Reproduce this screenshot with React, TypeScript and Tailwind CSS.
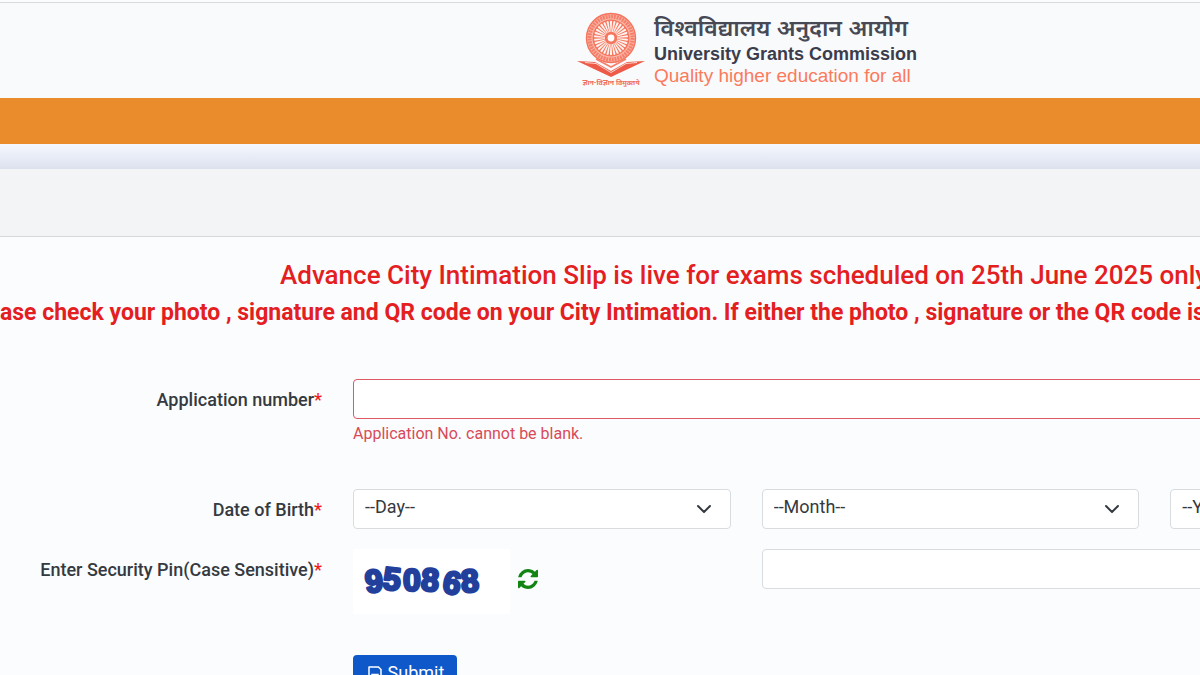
import type { ReactNode } from "react";
import { RiSaveLine } from "react-icons/ri";

const spokes = Array.from({ length: 30 }, (_, i) => i * 12);

function Emblem() {
  return (
    <svg viewBox="0 0 70 78" className="h-[78px] w-[70px] shrink-0" aria-hidden="true">
      <circle cx="35" cy="27" r="24.5" fill="#fbb9aa" stroke="#f4735c" strokeWidth="1.4" />
      <circle cx="35" cy="27" r="21.5" fill="none" stroke="#f4806c" strokeWidth="4" strokeDasharray="2 0.8" />
      <circle cx="35" cy="27" r="18.5" fill="#f4765e" />
      {spokes.map((a) => (
        <path key={a} d="M34.6 21 L33.9 10.5 Q35 9 36.1 10.5 L35.4 21 Z" fill="#fff3ef" transform={`rotate(${a} 35 27)`} />
      ))}
      <circle cx="35" cy="27" r="6" fill="#f4765e" />
      <circle cx="35" cy="27" r="3.4" fill="#fff" />
      <path d="M1 50 L19 51 L35 60 L51 51 L69 50 L35 66 Z" fill="#ee5a48" />
      <path d="M9 51.5 L20 52.5 L35 61.5 L50 52.5 L61 51.5" fill="none" stroke="#fcd5cc" strokeWidth="1" />
      <path d="M20 48 L35 56 L50 48" fill="none" stroke="#f4806c" strokeWidth="1.6" />
      <text x="35" y="74" textAnchor="middle" className="text-[7px] font-bold" fill="#f0705e">
        ज्ञान-विज्ञान विमुक्तये
      </text>
    </svg>
  );
}

function Captcha() {
  const digits = [
    { c: "9", x: 21, y: 43, r: -6 },
    { c: "5", x: 39, y: 41, r: 6 },
    { c: "0", x: 59, y: 42, r: 0 },
    { c: "8", x: 77, y: 42, r: 4 },
    { c: "6", x: 99, y: 45, r: 10 },
    { c: "8", x: 117, y: 43, r: -4 },
  ];
  return (
    <svg viewBox="0 0 157 65" className="h-[65px] w-[157px] bg-white" role="img" aria-label="Security pin">
      {digits.map((d) => (
        <text
          key={d.x}
          x={d.x}
          y={d.y}
          textAnchor="middle"
          transform={`rotate(${d.r} ${d.x} ${d.y - 10})`}
          className="font-['Liberation_Sans',sans-serif] text-[32px] font-bold"
          fill="#233f9c"
          stroke="#233f9c"
          strokeWidth="2.6"
          strokeLinejoin="round"
        >
          {d.c}
        </text>
      ))}
    </svg>
  );
}

function RefreshIcon() {
  return (
    <svg viewBox="0 0 1536 1536" className="size-5" fill="currentColor" aria-hidden="true">
      <path d="M1511 928q0 5-1 7-64 268-268 434.500t-478 166.500q-146 0-282.500-55t-243.500-157l-129 129q-19 19-45 19t-45-19-19-45v-448q0-26 19-45t45-19h448q26 0 45 19t19 45-19 45l-137 137q71 66 161 102t187 36q134 0 250-65t186-179q11-17 53-117 8-23 30-23h192q13 0 22.500 9.500t9.500 22.500zm25-800v448q0 26-19 45t-45 19h-448q-26 0-45-19t-19-45 19-45l138-138q-148-137-349-137-134 0-250 65t-186 179q-11 17-53 117-8 23-30 23h-199q-13 0-22.500-9.500t-9.500-22.500v-7q65-268 270-434.500t480-166.500q146 0 284 55.500t245 156.500l130-129q19-19 45-19t45 19 19 45z" />
    </svg>
  );
}

function Label({ htmlFor, children }: { htmlFor: string; children: ReactNode }) {
  return (
    <label htmlFor={htmlFor} className="pt-[9px] text-right text-lg leading-6 font-medium whitespace-nowrap">
      {children}
      <span className="text-[#f01c24]">*</span>
    </label>
  );
}

function DateSelect({ id, name }: { id?: string; name: string }) {
  return (
    <div className="relative">
      <select
        id={id}
        aria-label={name}
        className="h-10 w-full appearance-none rounded border border-[#d9dcdf] bg-white px-[11px] pb-1 text-lg leading-6"
      >
        <option>{`--${name}--`}</option>
      </select>
      <svg viewBox="0 0 16 16" className="pointer-events-none absolute top-3 right-[19px] size-4" aria-hidden="true">
        <path d="M2 5l6 6 6-6" fill="none" stroke="#343a40" strokeWidth="2" strokeLinecap="round" strokeLinejoin="round" />
      </svg>
    </div>
  );
}

export default function App() {
  return (
    <div className="h-screen overflow-hidden bg-[#fbfcfe] font-[Roboto,'Noto_Sans',sans-serif] text-[#343a40]">
      <header className="mt-0.5 flex h-24 items-start gap-2 border-t border-[#d6dade] bg-[#f9fafc] pt-2 pl-[48%]">
        <Emblem />
        <div className="pt-[3px] font-['Liberation_Sans','Noto_Sans',sans-serif] whitespace-nowrap">
          <p className="text-[23px] leading-7 font-semibold text-[#474955]">विश्वविद्यालय अनुदान आयोग</p>
          <p className="text-lg leading-6 font-bold text-[#3b3d4c]">University Grants Commission</p>
          <p className="text-[19px] leading-5 text-[#fb7a5c]">Quality higher education for all</p>
        </div>
      </header>
      <div className="h-[46px] bg-[#ea8b2c]" />
      <div className="h-[25px] bg-linear-to-b from-[#f5f8fe] to-[#dde1ef]" />
      <div className="h-[68px] border-b border-[#d5d8db] bg-[#f3f4f6]" />
      <main>
        <div className="pt-5 whitespace-nowrap text-[#e3201f]">
          <h1 className="pl-[280px] text-[26px] leading-9 font-medium">
            Advance City Intimation Slip is live for exams scheduled on 25th June 2025 only
          </h1>
          <p className="text-[23px] leading-10 font-bold">
            ase check your photo , signature and QR code on your City Intimation. If either the photo , signature or the QR code is
          </p>
        </div>
        <form className="mt-[46px] grid w-[129%] grid-cols-[322px_repeat(3,minmax(0,1fr))] gap-x-[31px]">
          <Label htmlFor="application">Application number</Label>
          <div className="col-span-3 h-[110px]">
            <input id="application" className="block h-10 w-full rounded border border-[#dc5965] bg-white px-3" />
            <p className="pt-[3px] text-base leading-6 text-[#d84a58]">Application No. cannot be blank.</p>
          </div>
          <Label htmlFor="day">Date of Birth</Label>
          <DateSelect id="day" name="Day" />
          <DateSelect name="Month" />
          <DateSelect name="Year" />
          <div className="col-span-4 h-5" />
          <Label htmlFor="pin">Enter Security Pin(Case Sensitive)</Label>
          <div className="flex h-[106px] items-start gap-2">
            <Captcha />
            <button type="button" aria-label="Refresh security pin" className="pt-5 text-[#128412]">
              <RefreshIcon />
            </button>
          </div>
          <input id="pin" className="col-span-2 h-10 rounded border border-[#d9dcdf] bg-white px-3" />
          <button
            type="submit"
            className="col-start-2 flex h-9 w-[104px] items-center justify-center gap-1 rounded bg-[#0f58ca] text-lg leading-6 text-white"
          >
            <RiSaveLine className="size-[18px]" />
            Submit
          </button>
        </form>
      </main>
    </div>
  );
}
